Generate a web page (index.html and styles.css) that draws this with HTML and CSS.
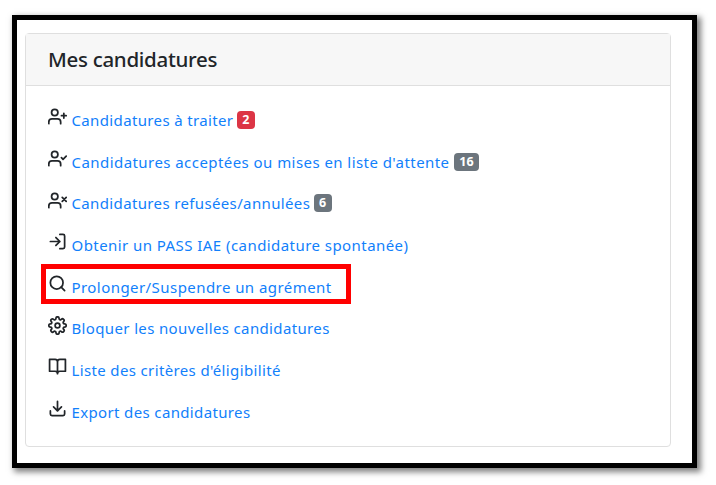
FILE: index.html
```html
<!DOCTYPE html>
<html lang="fr">
<head>
<meta charset="utf-8">
<title>Mes candidatures</title>
<link rel="stylesheet" href="styles.css">
</head>
<body>
<main class="frame">
  <section class="card">
    <h1 class="card-header">Mes candidatures</h1>
    <ul class="links">
      <li><svg class="icon" viewBox="0 0 24 24"><path d="M16 21v-2a4 4 0 0 0-4-4H5a4 4 0 0 0-4 4v2"/><circle cx="8.5" cy="7" r="4"/><path d="M20 8v6M23 11h-6"/></svg><a>Candidatures à traiter</a><span class="badge red">2</span></li>
      <li><svg class="icon" viewBox="0 0 24 24"><path d="M16 21v-2a4 4 0 0 0-4-4H5a4 4 0 0 0-4 4v2"/><circle cx="8.5" cy="7" r="4"/><path d="M17 11l2 2 4-4"/></svg><a class="loose">Candidatures acceptées ou mises en liste d'attente</a><span class="badge wide">16</span></li>
      <li><svg class="icon" viewBox="0 0 24 24"><path d="M16 21v-2a4 4 0 0 0-4-4H5a4 4 0 0 0-4 4v2"/><circle cx="8.5" cy="7" r="4"/><path d="M18 8l5 5M23 8l-5 5"/></svg><a>Candidatures refusées/annulées</a><span class="badge">6</span></li>
      <li><svg class="icon" viewBox="0 0 24 24"><path d="M15 3h4a2 2 0 0 1 2 2v14a2 2 0 0 1-2 2h-4M10 17l5-5-5-5M15 12H3"/></svg><a class="loose">Obtenir un PASS IAE (candidature spontanée)</a></li>
      <li class="highlighted"><svg class="icon" viewBox="0 0 24 24"><circle cx="11" cy="11" r="8"/><path d="M21 21l-4.35-4.35"/></svg><a class="loose">Prolonger/Suspendre un agrément</a></li>
      <li><svg class="icon" viewBox="0 0 24 24"><circle cx="12" cy="12" r="3"/><path d="M19.4 15a1.65 1.65 0 0 0 .33 1.82l.06.06a2 2 0 0 1-2.83 2.83l-.06-.06a1.65 1.65 0 0 0-1.82-.33 1.65 1.65 0 0 0-1 1.51V21a2 2 0 0 1-4 0v-.09A1.65 1.65 0 0 0 9 19.4a1.65 1.65 0 0 0-1.82.33l-.06.06a2 2 0 0 1-2.83-2.83l.06-.06a1.65 1.65 0 0 0 .33-1.82 1.65 1.65 0 0 0-1.51-1H3a2 2 0 0 1 0-4h.09A1.65 1.65 0 0 0 4.6 9a1.65 1.65 0 0 0-.33-1.82l-.06-.06a2 2 0 0 1 2.83-2.83l.06.06a1.65 1.65 0 0 0 1.82.33H9a1.65 1.65 0 0 0 1-1.51V3a2 2 0 0 1 4 0v.09a1.65 1.65 0 0 0 1 1.51 1.65 1.65 0 0 0 1.82-.33l.06-.06a2 2 0 0 1 2.83 2.83l-.06.06a1.65 1.65 0 0 0-.33 1.82V9a1.65 1.65 0 0 0 1.51 1H21a2 2 0 0 1 0 4h-.09a1.65 1.65 0 0 0-1.51 1z"/></svg><a>Bloquer les nouvelles candidatures</a></li>
      <li><svg class="icon" viewBox="0 0 24 24"><path d="M2 3h7a3 3 0 0 1 3 3v15a3 3 0 0 0-3-3H2zM22 3h-7a3 3 0 0 0-3 3v15a3 3 0 0 1 3-3h7z"/></svg><a>Liste des critères d'éligibilité</a></li>
      <li><svg class="icon" viewBox="0 0 24 24"><path d="M21 15v4a2 2 0 0 1-2 2H5a2 2 0 0 1-2-2v-4M7 10l5 5 5-5M12 15V3"/></svg><a>Export des candidatures</a></li>
    </ul>
  </section>
</main>
</body>
</html>
```
FILE: styles.css
```css
*, *::after { box-sizing: border-box; }
body {
  margin: 0;
  padding: 15px 19px 17px 12px;
  height: 485px;
  background: #fff;
  font-family: "Noto Sans", "Open Sans", sans-serif;
  overflow: hidden;
}
.frame {
  height: 453px;
  border: 5px solid #000;
  padding: 13px 21px 16px 8px;
  background: #fff;
  box-shadow: 3px 3px 6px 1px rgba(0, 0, 0, .5);
}
.card {
  height: 414px;
  border: 1px solid #dfdfdf;
  border-radius: 4px;
}
.card-header {
  margin: 0;
  height: 52px;
  padding-left: 22px;
  background: #f7f7f7;
  border-bottom: 1px solid #dfdfdf;
  font-size: 20.5px;
  font-weight: 500;
  letter-spacing: -.3px;
  line-height: 51px;
  color: #212529;
}
.links {
  list-style: none;
  margin: 0;
  padding: 13px 0 0 21px;
}
.links li {
  display: flex;
  align-items: center;
  position: relative;
  height: 41.7px;
  font-size: 15px;
  white-space: nowrap;
}
.links a {
  color: #1180fb;
  letter-spacing: .36px;
}
.links a.loose { letter-spacing: .44px; }
.icon {
  width: 19px;
  height: 19px;
  margin: -6px 5px 0 .5px;
  fill: none;
  stroke: #212529;
  stroke-width: 2.2;
  stroke-linecap: round;
  stroke-linejoin: round;
}
.badge {
  margin-left: 3.5px;
  min-width: 18px;
  padding: 0 5px;
  height: 18px;
  line-height: 18px;
  border-radius: 4px;
  background: #6c757d;
  color: #fff;
  font-size: 12.5px;
  font-weight: 700;
  text-align: center;
}
.badge.wide { min-width: 25px; margin-left: 4.5px; }
.badge.red { background: #dc3545; }
.highlighted::after {
  content: "";
  position: absolute;
  left: -6px;
  top: -2px;
  width: 310px;
  height: 40px;
  border: 5px solid #f00;
}
```
